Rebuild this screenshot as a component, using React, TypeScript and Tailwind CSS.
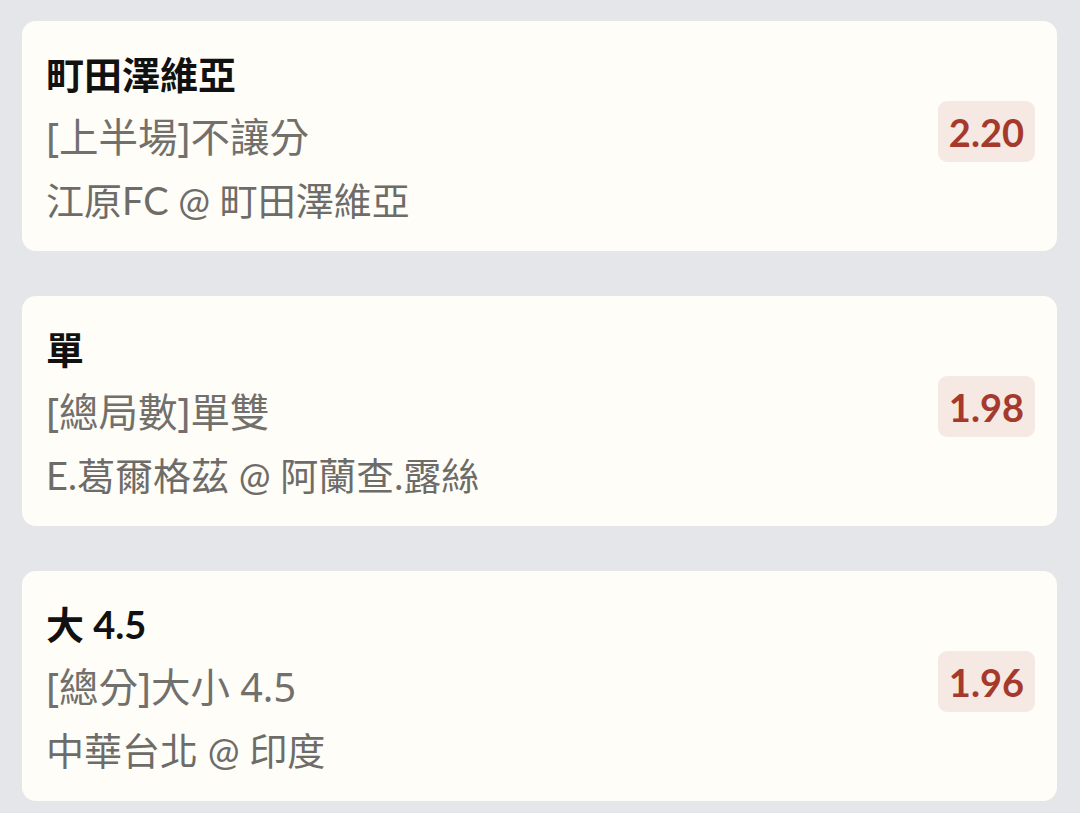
import React from 'react';

type Bet = {
  pick: string;
  market: string;
  match: string;
  odds: string;
};

const bets: Bet[] = [
  { pick: '町田澤維亞', market: '[上半場]不讓分', match: '江原FC @ 町田澤維亞', odds: '2.20' },
  { pick: '單', market: '[總局數]單雙', match: 'E.葛爾格茲 @ 阿蘭查.露絲', odds: '1.98' },
  { pick: '大 4.5', market: '[總分]大小 4.5', match: '中華台北 @ 印度', odds: '1.96' },
];

const BetCard = ({ bet }: { bet: Bet }) => {
  return (
    <div className="h-[230px] rounded-[14px] bg-[#fffdf7] pl-6 pr-[22px] flex items-center justify-between">
      <div className="flex flex-col mt-[3px] text-[38px] leading-[63px]">
        <span className="font-bold text-[#111111]">{bet.pick}</span>
        {/* market line uses a different latin face than the rest */}
        <span className="font-['Noto_Sans','Noto_Sans_CJK_TC',sans-serif] text-[39.5px] text-[#72706c]">
          {bet.market}
        </span>
        <span className="text-[#6e6c69]">{bet.match}</span>
      </div>
      <div className="mb-[9px] h-[61px] px-[11px] rounded-[9px] bg-[#f6e8e2] flex items-center">
        <span className="text-[38px] font-bold text-[#a53a2c] leading-none">{bet.odds}</span>
      </div>
    </div>
  );
};

export default function App() {
  return (
    <div className="min-h-screen bg-[#e5e6e9] pl-[22px] pr-[23px] pt-[21px] pb-6 flex flex-col gap-[45px] font-['Lato','Noto_Sans_CJK_TC',sans-serif]">
      {bets.map((bet) => (
        <BetCard key={bet.odds} bet={bet} />
      ))}
    </div>
  );
}
